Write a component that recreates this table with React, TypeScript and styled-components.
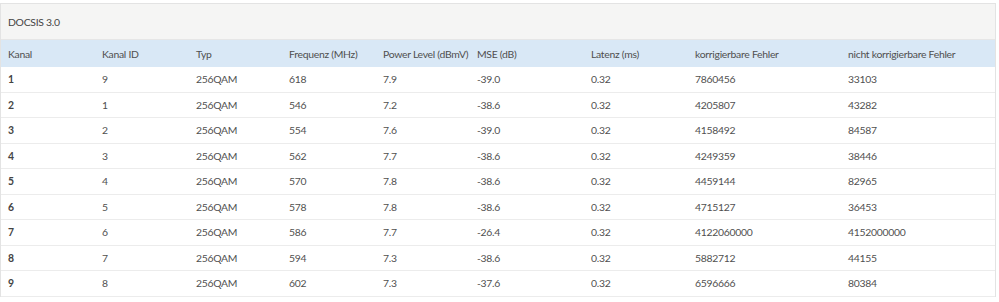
import React from "react";
import styled, { createGlobalStyle } from "styled-components";

const GlobalStyle = createGlobalStyle`
  body {
    margin: 0;
    background: #fff;
    font-family: Lato, "Liberation Sans", sans-serif;
  }
`;

const columns = [
  { label: "Kanal", width: 94 },
  { label: "Kanal ID", width: 94 },
  { label: "Typ", width: 93 },
  { label: "Frequenz (MHz)", width: 94 },
  { label: "Power Level (dBmV)", width: 94 },
  { label: "MSE (dB)", width: 114 },
  { label: "Latenz (ms)", width: 104 },
  { label: "korrigierbare Fehler", width: 153 },
  { label: "nicht korrigierbare Fehler", width: 154 },
];

const rows = [
  ["1", "9", "256QAM", "618", "7.9", "-39.0", "0.32", "7860456", "33103"],
  ["2", "1", "256QAM", "546", "7.2", "-38.6", "0.32", "4205807", "43282"],
  ["3", "2", "256QAM", "554", "7.6", "-39.0", "0.32", "4158492", "84587"],
  ["4", "3", "256QAM", "562", "7.7", "-38.6", "0.32", "4249359", "38446"],
  ["5", "4", "256QAM", "570", "7.8", "-38.6", "0.32", "4459144", "82965"],
  ["6", "5", "256QAM", "578", "7.8", "-38.6", "0.32", "4715127", "36453"],
  ["7", "6", "256QAM", "586", "7.7", "-26.4", "0.32", "4122060000", "4152000000"],
  ["8", "7", "256QAM", "594", "7.3", "-38.6", "0.32", "5882712", "44155"],
  ["9", "8", "256QAM", "602", "7.3", "-37.6", "0.32", "6596666", "80384"],
];

const Panel = styled.section`
  margin-top: 3px;
  width: 994px;
  border: 1px solid #e3e3e3;
  border-bottom: none;
  color: #4f4f4f;
  font-size: 10.4px;
  letter-spacing: -0.28px;
`;

const PanelHeading = styled.div`
  height: 35px;
  padding: 0 7px;
  display: flex;
  align-items: center;
  background: #f5f5f4;
  border-bottom: 1px solid #e6e6e6;
  color: #444;
`;

const Table = styled.table`
  width: 100%;
  border-collapse: collapse;
  table-layout: fixed;
`;

const HeadCell = styled.th`
  height: 27px;
  padding: 0 7px;
  text-align: left;
  font-weight: 400;
  background: #d9e8f6;
  color: #4f4f4f;
  white-space: nowrap;
`;

const Row = styled.tr`
  border-bottom: 1px solid #ececec;
`;

const Cell = styled.td<{ $first?: boolean }>`
  height: 24.5px;
  padding: 0 7px;
  font-weight: ${(p) => (p.$first ? 700 : 400)};
  color: ${(p) => (p.$first ? "#444" : "#4f4f4f")};
  white-space: nowrap;
`;

export default function App() {
  return (
    <>
      <GlobalStyle />
      <Panel>
        <PanelHeading>DOCSIS 3.0</PanelHeading>
        <Table>
          <colgroup>
            {columns.map((c) => (
              <col key={c.label} style={{ width: c.width }} />
            ))}
          </colgroup>
          <thead>
            <tr>
              {columns.map((c) => (
                <HeadCell key={c.label}>{c.label}</HeadCell>
              ))}
            </tr>
          </thead>
          <tbody>
            {rows.map((r) => (
              <Row key={r[0]}>
                {r.map((v, i) => (
                  <Cell key={i} $first={i === 0}>
                    {v}
                  </Cell>
                ))}
              </Row>
            ))}
          </tbody>
        </Table>
      </Panel>
    </>
  );
}
